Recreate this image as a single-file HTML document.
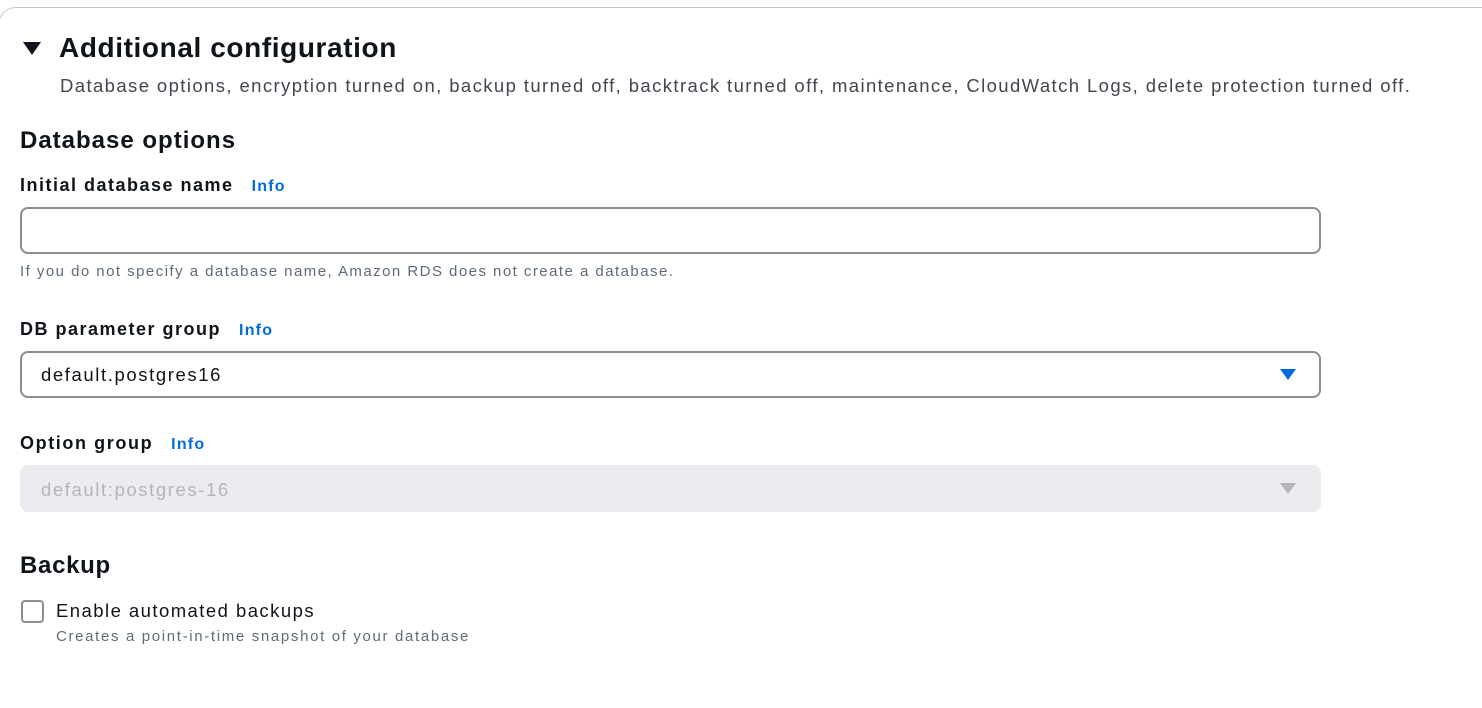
<!DOCTYPE html>
<html><head><style>
body{margin:0;background:#fff;font-family:"Liberation Sans",sans-serif;color:#0f141a;width:1482px;height:667px;overflow:hidden;position:relative}
.card{position:absolute;left:-2px;top:7px;width:1600px;height:700px;border-top:1px solid #c6c6cd;border-left:1px solid #c6c6cd;border-top-left-radius:18px}
.a{position:absolute;white-space:nowrap}
.info{color:#006ce0;font-weight:bold;font-size:16px;margin-left:18px;letter-spacing:1.2px}
.inp{position:absolute;left:20px;width:1297px;height:43px;border:2px solid #8c8c94;border-radius:8px;box-sizing:content-box}
.lbl{font-weight:bold;font-size:18px;letter-spacing:1.5px}
.help{font-size:15px;color:#5f6b7a;letter-spacing:1.46px}
</style></head><body>
<div class="card"></div>
<svg class="a" style="left:23px;top:42px" width="18" height="14"><polygon points="0,0 18,0 9,13" fill="#0f141a"/></svg>
<div class="a" style="left:59px;top:32px;font-size:28px;font-weight:bold;letter-spacing:0.6px">Additional configuration</div>
<div class="a" style="left:60px;top:75px;font-size:18.5px;color:#424650;letter-spacing:1.4px">Database options, encryption turned on, backup turned off, backtrack turned off, maintenance, CloudWatch Logs, delete protection turned off.</div>
<div class="a" style="left:20px;top:127px;font-size:24px;font-weight:bold;letter-spacing:1px">Database options</div>
<div class="a lbl" style="left:20px;top:175px">Initial database name<span class="info">Info</span></div>
<div class="inp" style="top:207px"></div>
<div class="a help" style="left:20px;top:263px">If you do not specify a database name, Amazon RDS does not create a database.</div>
<div class="a lbl" style="left:20px;top:319px">DB parameter group<span class="info">Info</span></div>
<div class="inp" style="top:351px"></div>
<div class="a" style="left:41px;top:364px;font-size:18.5px;letter-spacing:1.6px">default.postgres16</div>
<svg class="a" style="left:1280px;top:369px" width="16" height="12"><polygon points="0,0 16,0 8,11" fill="#006ce0"/></svg>
<div class="a lbl" style="left:20px;top:433px;letter-spacing:1.6px">Option group<span class="info">Info</span></div>
<div class="a" style="left:20px;top:465px;width:1301px;height:47px;background:#ebebf0;border-radius:8px"></div>
<div class="a" style="left:41px;top:479px;font-size:18.5px;color:#b4b4bb;letter-spacing:1.6px">default:postgres-16</div>
<svg class="a" style="left:1280px;top:483px" width="16" height="12"><polygon points="0,0 16,0 8,11" fill="#b4b4bb"/></svg>
<div class="a" style="left:20px;top:552px;font-size:24px;font-weight:bold;letter-spacing:0.7px">Backup</div>
<div class="a" style="left:21px;top:600px;width:19px;height:19px;border:2px solid #8c8c94;border-radius:4px"></div>
<div class="a" style="left:56px;top:600px;font-size:18.5px;letter-spacing:1.45px">Enable automated backups</div>
<div class="a help" style="left:56px;top:628px;letter-spacing:1.66px">Creates a point-in-time snapshot of your database</div>
</body></html>
